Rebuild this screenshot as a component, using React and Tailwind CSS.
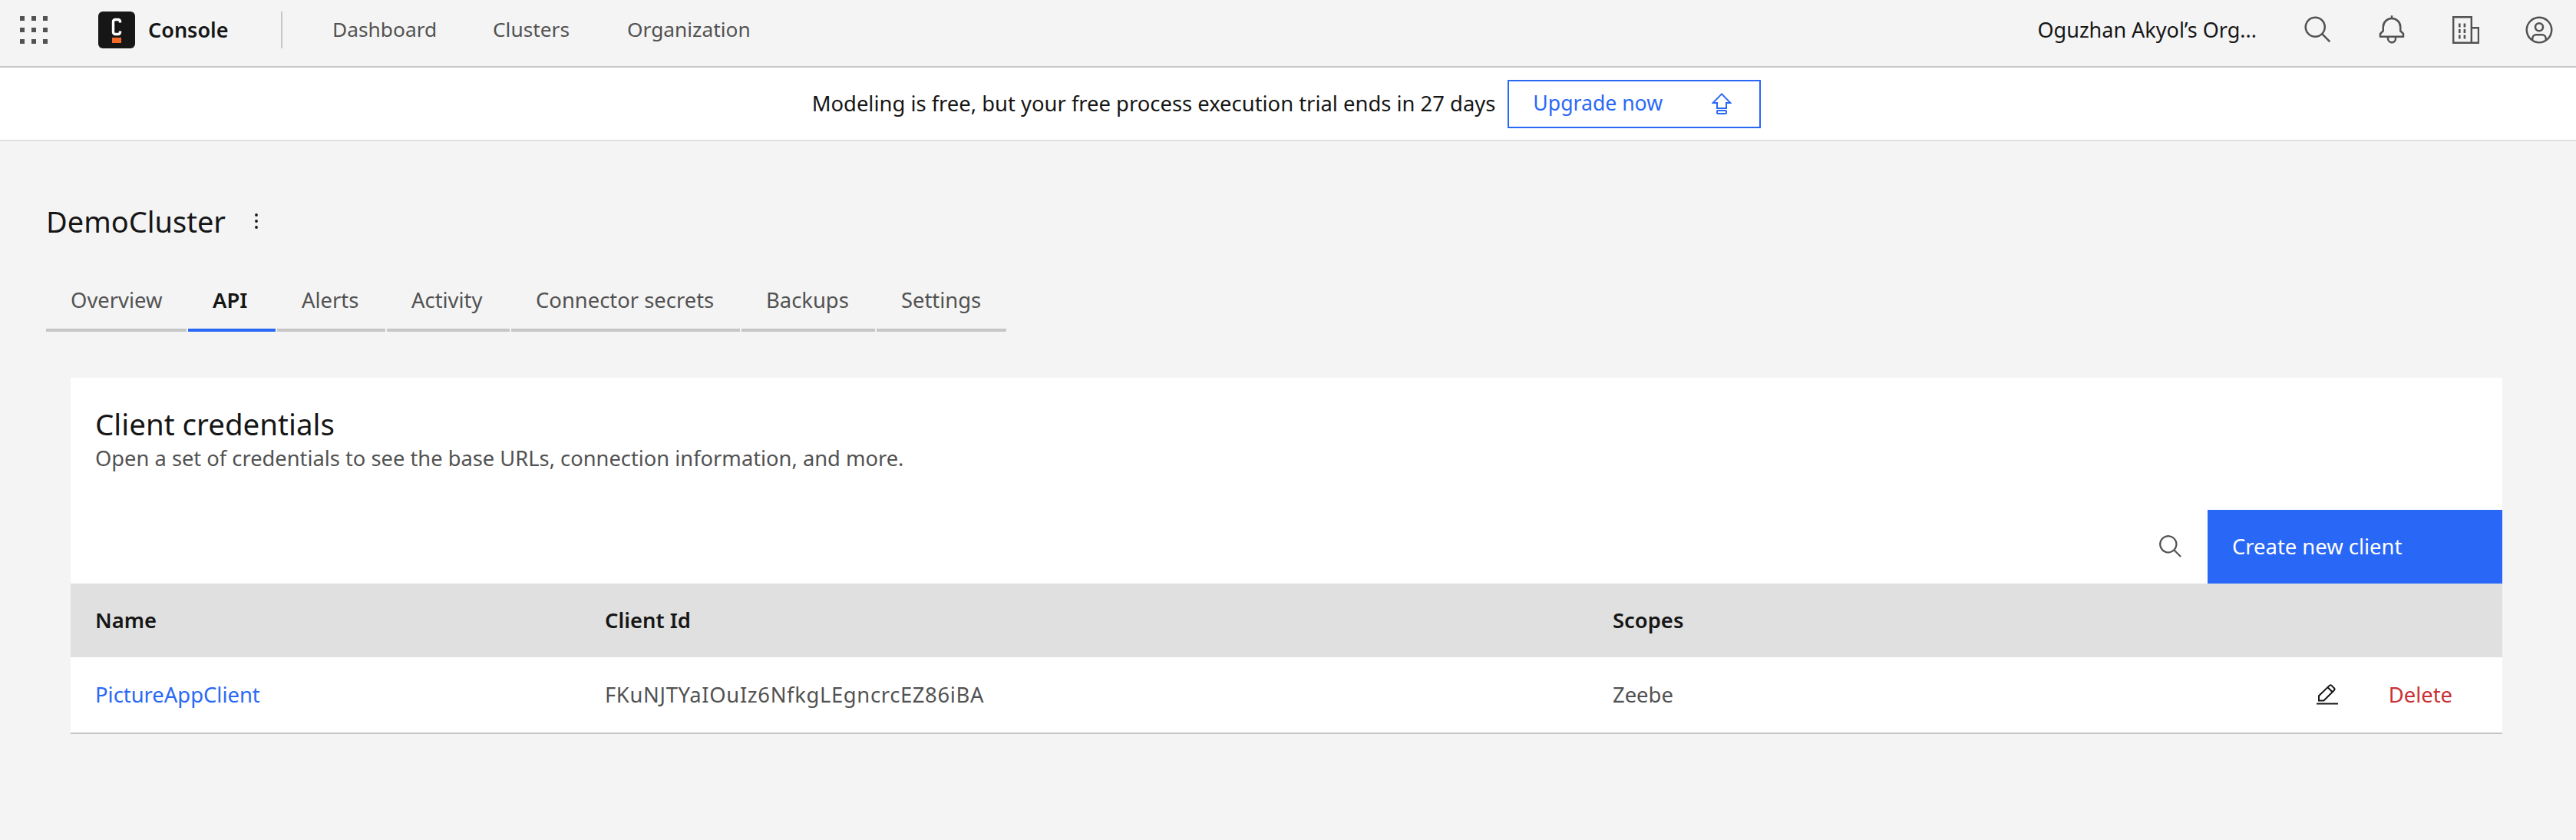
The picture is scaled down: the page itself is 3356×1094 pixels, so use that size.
import React from "react";

const tabs = [
  { label: "Overview", width: "w-[183px]" },
  { label: "API", width: "w-[114px]", active: true },
  { label: "Alerts", width: "w-[141px]" },
  { label: "Activity", width: "w-[160px]" },
  { label: "Connector secrets", width: "w-[298px]" },
  { label: "Backups", width: "w-[174px]" },
  { label: "Settings", width: "w-[169px]" },
];

const SearchIcon = ({ className }) => (
  <svg viewBox="0 0 32 32" fill="currentColor" className={className}>
    <path d="M29 27.5859l-7.5521-7.5521a11.0177 11.0177 0 1 0-1.4141 1.4141L27.5859 29ZM4 13a9 9 0 1 1 9 9A9.01 9.01 0 0 1 4 13Z" />
  </svg>
);

const BellIcon = () => (
  <svg viewBox="0 0 32 32" fill="currentColor" className="w-10 h-10">
    <path d="M28.7071,19.293,26,16.5859V13a10.0136,10.0136,0,0,0-9-9.9492V1H15V3.0508A10.0136,10.0136,0,0,0,6,13v3.5859L3.2929,19.293A1,1,0,0,0,3,20v3a1,1,0,0,0,1,1h7v.7768a5.152,5.152,0,0,0,4.5,5.1987A5.0057,5.0057,0,0,0,21,25V24h7a1,1,0,0,0,1-1V20A1,1,0,0,0,28.7071,19.293ZM19,25a3,3,0,0,1-6,0V24h6Zm8-3H5V20.4141L7.707,17.707A1,1,0,0,0,8,17V13a8,8,0,0,1,16,0v4a1,1,0,0,0,.293.707L27,20.4141Z" />
  </svg>
);

const BuildingIcon = () => (
  <svg viewBox="0 0 36 36" fill="none" className="w-9 h-9">
    <path d="M2.2 34.8V1.2H25.8V34.8ZM25.8 15.2H35V34.8H2.2" stroke="currentColor" strokeWidth="2.4" />
    <path d="M9 9.5h2.6v5H9ZM15.6 9.5h2.6v5h-2.6ZM9 17h2.6v5H9ZM15.6 17h2.6v5h-2.6ZM9 24.5h2.6v5H9ZM15.6 24.5h2.6v5h-2.6Z" fill="currentColor" />
  </svg>
);

const AvatarIcon = () => (
  <svg viewBox="0 0 32 32" fill="currentColor" className="w-10 h-10">
    <path d="M16,8a5,5,0,1,0,5,5A5,5,0,0,0,16,8Zm0,8a3,3,0,1,1,3-3A3.0034,3.0034,0,0,1,16,16Z" />
    <path d="M16,2A14,14,0,1,0,30,16,14.0158,14.0158,0,0,0,16,2ZM10,26.3765V25a3.0033,3.0033,0,0,1,3-3h6a3.0033,3.0033,0,0,1,3,3v1.3765a11.8989,11.8989,0,0,1-12,0Zm13.9925-1.4507A5.0016,5.0016,0,0,0,19,20H13a5.0016,5.0016,0,0,0-4.9925,4.9258,12,12,0,1,1,15.985,0Z" />
  </svg>
);

const GridIcon = () => (
  <svg viewBox="0 0 36 36" fill="currentColor" className="w-9 h-9">
    <path d="M0 0h6v6H0ZM15 0h6v6h-6ZM30 0h6v6h-6ZM0 15h6v6H0ZM15 15h6v6h-6ZM30 15h6v6h-6ZM0 30h6v6H0ZM15 30h6v6h-6ZM30 30h6v6h-6Z" />
  </svg>
);

const Logo = () => (
  <svg viewBox="0 0 48 48" className="w-12 h-12 ml-[66px] shrink-0">
    <rect width="48" height="48" rx="6" fill="#161616" />
    <path d="M28.5 14.5V13a2.5 2.5 0 0 0-2.5-2.5h-4A2.5 2.5 0 0 0 19.5 13v14a2.5 2.5 0 0 0 2.5 2.5h4a2.5 2.5 0 0 0 2.5-2.5v-1.5" fill="none" stroke="#fff" strokeWidth="3.4" />
    <rect x="18" y="34" width="12" height="7" fill="#f26b2a" />
  </svg>
);

const UpgradeIcon = () => (
  <svg viewBox="0 0 26 28" fill="none" stroke="currentColor" strokeWidth="2" className="w-[26px] h-7">
    <path d="M13 1.4 1.6 13H7v7h12v-7h5.4Z" />
    <rect x="7" y="23" width="12" height="4" rx="1" />
  </svg>
);

const EditIcon = () => (
  <svg viewBox="0 0 28 28" fill="none" className="w-7 h-7">
    <path d="M3 21.5v-6.3L16.8 1.9a2 2 0 0 1 2.8 0l3.3 3.3a2 2 0 0 1 0 2.8L9.4 21.5ZM14.6 4.2l6.1 6.1" stroke="#161616" strokeWidth="2" />
    <path d="M0 25.5h28" stroke="#161616" strokeWidth="2" />
  </svg>
);

const Kebab = () => (
  <svg viewBox="0 0 4 20" fill="currentColor" className="w-1 h-5 ml-[38px]">
    <circle cx="2" cy="2" r="1.9" />
    <circle cx="2" cy="10" r="1.9" />
    <circle cx="2" cy="18" r="1.9" />
  </svg>
);

const App = () => {
  return (
    <div className="min-h-screen bg-[#f4f4f4] text-[#161616] font-['Noto_Sans',sans-serif] text-[27.4px]">
      {/* Top bar */}
      <header className="h-[88px] border-b-2 border-[#c6c6c6] flex items-center pl-[26px] pb-2">
        <span className="text-[#525252]">
          <GridIcon />
        </span>
        <Logo />
        <span className="ml-[17px] w-[103px] font-semibold text-[27px] whitespace-nowrap">Console</span>
        <div className="ml-[70px] w-0.5 h-12 bg-[#c6c6c6]"></div>
        <nav className="ml-[65px] flex text-[#525252] text-[26.3px]">
          <a className="w-[209px]">Dashboard</a>
          <a className="w-[175px]">Clusters</a>
          <a>Organization</a>
        </nav>
        <div className="ml-auto flex items-center">
          <span className="mr-8 text-[27px] whitespace-nowrap">Oguzhan Akyol’s Org...</span>
          <div className="flex text-[#525252]">
            <span className="w-24 flex justify-center">
              <SearchIcon className="w-10 h-10" />
            </span>
            <span className="w-24 flex justify-center">
              <BellIcon />
            </span>
            <span className="w-24 flex justify-center items-center">
              <BuildingIcon />
            </span>
            <span className="w-24 flex justify-center">
              <AvatarIcon />
            </span>
          </div>
        </div>
      </header>

      {/* Trial banner */}
      <div className="h-[96px] bg-white border-b-2 border-[#e0e0e0] flex items-center justify-center pr-1">
        <span className="whitespace-nowrap">
          Modeling is free, but your free process execution trial ends in 27 days
        </span>
        <button className="ml-4 w-[330px] h-[63px] border-2 border-[#2968f6] text-[#2968f6] text-[26.6px] flex items-center justify-between pl-[31px] pr-9">
          Upgrade now
          <UpgradeIcon />
        </button>
      </div>

      <main className="px-[60px]">
        <div className="pt-20 h-[128px] flex items-center">
          <h1 className="text-[38px] leading-[48px] whitespace-nowrap">DemoCluster</h1>
          <Kebab />
        </div>

        {/* Tabs */}
        <div className="mt-14 flex gap-0.5">
          {tabs.map((tab) => (
            <div
              key={tab.label}
              className={`${tab.width} h-[64px] pl-8 pt-0.5 whitespace-nowrap border-b-4 ${
                tab.active ? "border-[#2968f6] font-semibold text-[#161616]" : "border-[#c6c6c6] text-[#525252]"
              }`}
            >
              {tab.label}
            </div>
          ))}
        </div>

        {/* Client credentials card */}
        <section className="mt-[60px] ml-8 w-[3168px] bg-white border-b-2 border-[#c6c6c6]">
          <div className="px-8 pt-[36px]">
            <h2 className="text-[38.5px] leading-[48px]">Client credentials</h2>
            <p className="mt-[3px] text-[27.3px] leading-9 text-[#525252]">
              Open a set of credentials to see the base URLs, connection information, and more.
            </p>
          </div>
          <div className="mt-[49px] h-24 flex justify-end items-center">
            <span className="text-[#525252] mr-[31px]">
              <SearchIcon className="w-[34px] h-[34px]" />
            </span>
            <button className="w-[384px] h-24 bg-[#2968f6] text-white text-left pl-8">
              Create new client
            </button>
          </div>
          <div className="h-24 bg-[#e0e0e0] px-8 grid grid-cols-[664px_1313px_1fr] items-center font-semibold">
            <span>Name</span>
            <span>Client Id</span>
            <span>Scopes</span>
          </div>
          <div className="h-[98px] px-8 grid grid-cols-[664px_1313px_1fr] items-center text-[#525252]">
            <a className="text-[#2968f6]">PictureAppClient</a>
            <span className="tracking-[0.65px]">FKuNJTYaIOuIz6NfkgLEgncrcEZ86iBA</span>
            <div className="flex items-center justify-between pr-[33px]">
              <span>Zeebe</span>
              <div className="flex items-center">
                <EditIcon />
                <span className="ml-[66px] text-[#c93035]">Delete</span>
              </div>
            </div>
          </div>
        </section>
      </main>
    </div>
  );
};

export default App;
